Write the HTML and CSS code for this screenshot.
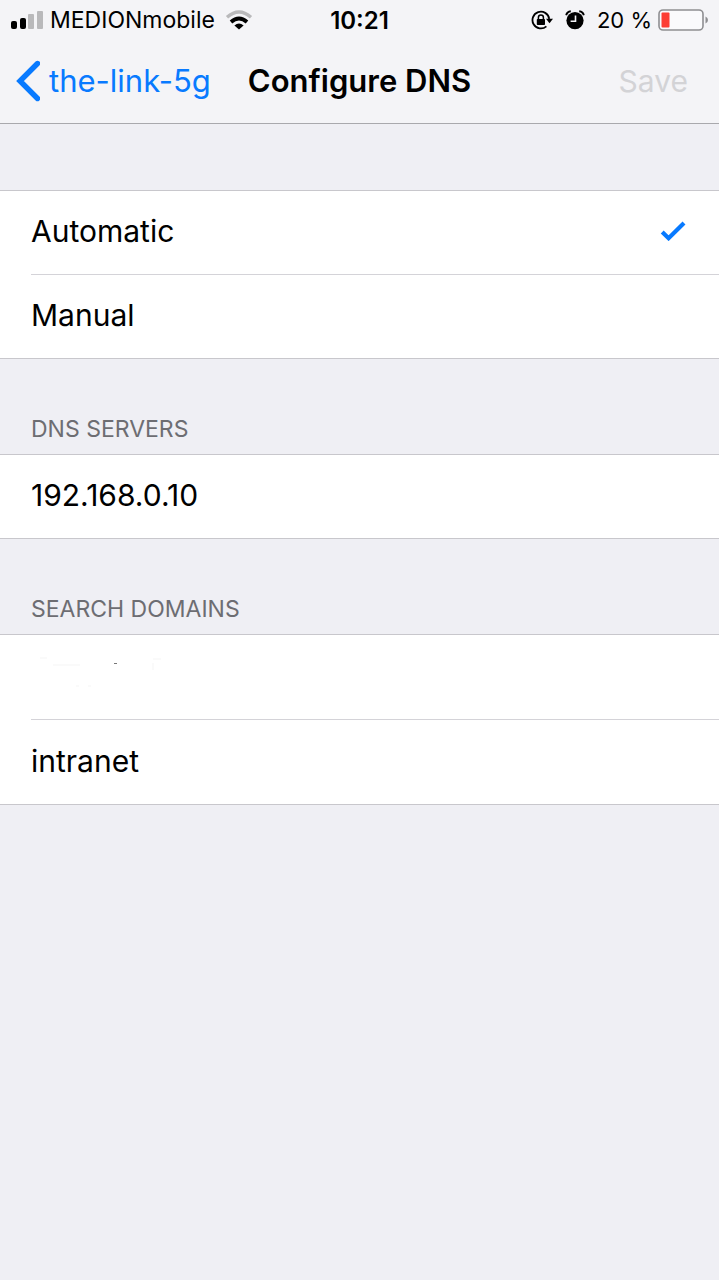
FILE: index.html
```html
<!DOCTYPE html>
<html lang="en">
<head>
<meta charset="utf-8">
<meta name="viewport" content="width=device-width, initial-scale=1">
<title>Configure DNS</title>
<link rel="stylesheet" href="styles.css">
</head>
<body>
<header class="top">
  <div class="status">
    <div class="status-left">
      <svg class="signal" width="32" height="20" viewBox="0 0 32 20" aria-hidden="true">
        <rect x="0" y="11" width="6" height="8" rx="2"/>
        <rect x="9" y="8" width="6" height="11" rx="2"/>
        <rect x="17" y="4" width="6" height="15" rx="1" fill="#b9b9bb"/>
        <rect x="26" y="1" width="6" height="18" rx="1" fill="#b9b9bb"/>
      </svg>
      <span>MEDIONmobile</span>
      <svg class="wifi" width="28" height="20" viewBox="0 0 28 20" aria-hidden="true">
        <path d="M2 7.2Q14-3.2 26 7.2" fill="none" stroke="#b9b9bb" stroke-width="3.4"/>
        <path d="M6 12Q14 5 22 12" fill="none" stroke="#000" stroke-width="3.8"/>
        <path d="M9.4 15.4Q14 11.4 18.6 15.4L14 19.4Z"/>
      </svg>
    </div>
    <time class="clock">10:21</time>
    <div class="status-right">
      <svg class="lock" width="22" height="20" viewBox="0 0 22 20" aria-hidden="true">
        <path d="M18.2 8.8A8.4 8.4 0 1 0 15.4 16.4" fill="none" stroke="#000" stroke-width="1.8"/>
        <path d="M15 8.8H22L18.5 13.2Z"/>
        <rect x="5.8" y="9" width="8.2" height="6" rx=".8"/>
        <path d="M7.4 9.5V7.4a2.5 2.5 0 0 1 5 0v2.1" fill="none" stroke="#000" stroke-width="1.5"/>
      </svg>
      <svg class="alarm" width="20" height="20" viewBox="0 0 20 20" aria-hidden="true">
        <circle cx="10" cy="10.6" r="8.6"/>
        <path d="M1.2 5.2Q2 1.6 5.8 1.2M18.8 5.2Q18 1.6 14.2 1.2" fill="none" stroke="#000" stroke-width="1.9"/>
        <path d="M10.5 5.6V11.2H5.6" fill="none" stroke="#f4f4f7" stroke-width="1.6"/>
      </svg>
      <span>20 %</span>
      <svg class="battery" width="50" height="22" viewBox="0 0 50 22" aria-hidden="true">
        <rect x="1" y="1" width="44" height="20" rx="4" fill="#fafafc" stroke="#8e8e91" stroke-width="1.6"/>
        <rect x="3.5" y="3.5" width="8" height="15" rx="1" fill="#fc3d34"/>
        <path d="M47.5 7.5Q50 8.5 50 11T47.5 14.5Z" fill="#8e8e91"/>
      </svg>
    </div>
  </div>
  <nav class="nav">
    <a class="back" href="#">
      <svg width="24" height="42" viewBox="0 0 24 42" aria-hidden="true">
        <path d="M21.5 3.5L4 21L21.5 38.5" fill="none" stroke="#087aff" stroke-width="5.4" stroke-linecap="round"/>
      </svg>
      <span>the-link-5g</span>
    </a>
    <h1 class="title">Configure DNS</h1>
    <button class="save" type="button" disabled>Save</button>
  </nav>
</header>
<main>
  <section class="group group-mode" role="radiogroup" aria-label="DNS mode">
    <label class="row"><span>Automatic</span><input class="radio" type="radio" name="mode" checked>
      <svg class="check" width="26" height="20" viewBox="0 0 26 20" aria-hidden="true">
        <path d="M2.2 11L8.6 17.2L24 2" fill="none" stroke="#087aff" stroke-width="4.2"/>
      </svg>
    </label>
    <label class="row"><span>Manual</span><input class="radio" type="radio" name="mode">
      <svg class="check" width="26" height="20" viewBox="0 0 26 20" aria-hidden="true">
        <path d="M2.2 11L8.6 17.2L24 2" fill="none" stroke="#087aff" stroke-width="4.2"/>
      </svg>
    </label>
  </section>
  <h2 class="heading" id="servers">DNS SERVERS</h2>
  <section class="group">
    <div class="row"><input class="field" type="text" value="192.168.0.10" aria-labelledby="servers"></div>
  </section>
  <h2 class="heading" id="domains">SEARCH DOMAINS</h2>
  <section class="group group-domains">
    <div class="row"><input class="field" type="text" value="" aria-labelledby="domains">
      <svg class="specks" width="144" height="32" viewBox="0 0 144 32" aria-hidden="true">
        <path d="M15 3H22M28 10H55M128 4H136M128 8V15M51 31H54M63 31H66" stroke="#f5f5f5"/>
        <path d="M89 8.5H92" stroke="#777"/>
      </svg>
    </div>
    <div class="row"><input class="field" type="text" value="intranet" aria-labelledby="domains"></div>
  </section>
</main>
</body>
</html>
```
FILE: styles.css
```css
* { box-sizing: border-box; }
body {
  margin: 0;
  min-height: 100vh;
  background: #efeff4;
  color: #000;
  font-family: Inter, "Liberation Sans", sans-serif;
  font-size: 30px;
}
svg { display: block; flex: none; }
.top {
  background: #f4f4f7;
  border-bottom: 1px solid #a9a9ad;
}
.status {
  display: grid;
  grid-template-columns: 1fr auto 1fr;
  align-items: center;
  height: 40px;
  padding: 0 11px;
  font-size: 23px;
}
.status-left, .status-right { display: flex; align-items: center; }
.status-left { gap: 7px; }
.wifi { margin-left: 3px; }
.clock { font-size: 24px; font-weight: 600; }
.status-right { justify-content: flex-end; gap: 6px; font-size: 22px; }
.alarm { margin: 0 6px; }
.nav {
  display: grid;
  grid-template-columns: 1fr auto 1fr;
  align-items: center;
  height: 83px;
  padding: 0 16px 2px;
}
.back {
  display: flex;
  align-items: center;
  gap: 9px;
  color: #087aff;
  font-size: 31px;
  text-decoration: none;
}
.title { margin: 0; font-size: 31px; font-weight: 600; }
.save {
  justify-self: end;
  margin: 0 15px 0 0;
  padding: 0;
  border: 0;
  background: none;
  color: #d3d3d6;
  font: inherit;
}
.group {
  background: #fff;
  border-top: 1px solid #c8c7cc;
  border-bottom: 1px solid #c8c7cc;
}
.group-mode { margin-top: 66px; }
.row {
  position: relative;
  display: flex;
  align-items: center;
  justify-content: space-between;
  height: 83px;
  margin-left: 31px;
  padding: 0 33px 3px 0;
}
.group-domains .row { height: 84px; }
.row + .row { border-top: 1px solid #d4d3d8; height: 84px; }
.group-domains .row + .row { height: 85px; }
.radio { position: absolute; opacity: 0; }
.check { visibility: hidden; }
.radio:checked + .check { visibility: visible; }
.heading {
  margin: 0;
  padding: 54px 31px 9px;
  color: #6d6d72;
  font-size: 23px;
  font-weight: 400;
  line-height: 32px;
}
.field {
  width: 100%;
  padding: 0;
  border: 0;
  outline: 0;
  background: none;
  color: inherit;
  font: inherit;
}
.specks { position: absolute; left: -6px; top: 20px; }
```
